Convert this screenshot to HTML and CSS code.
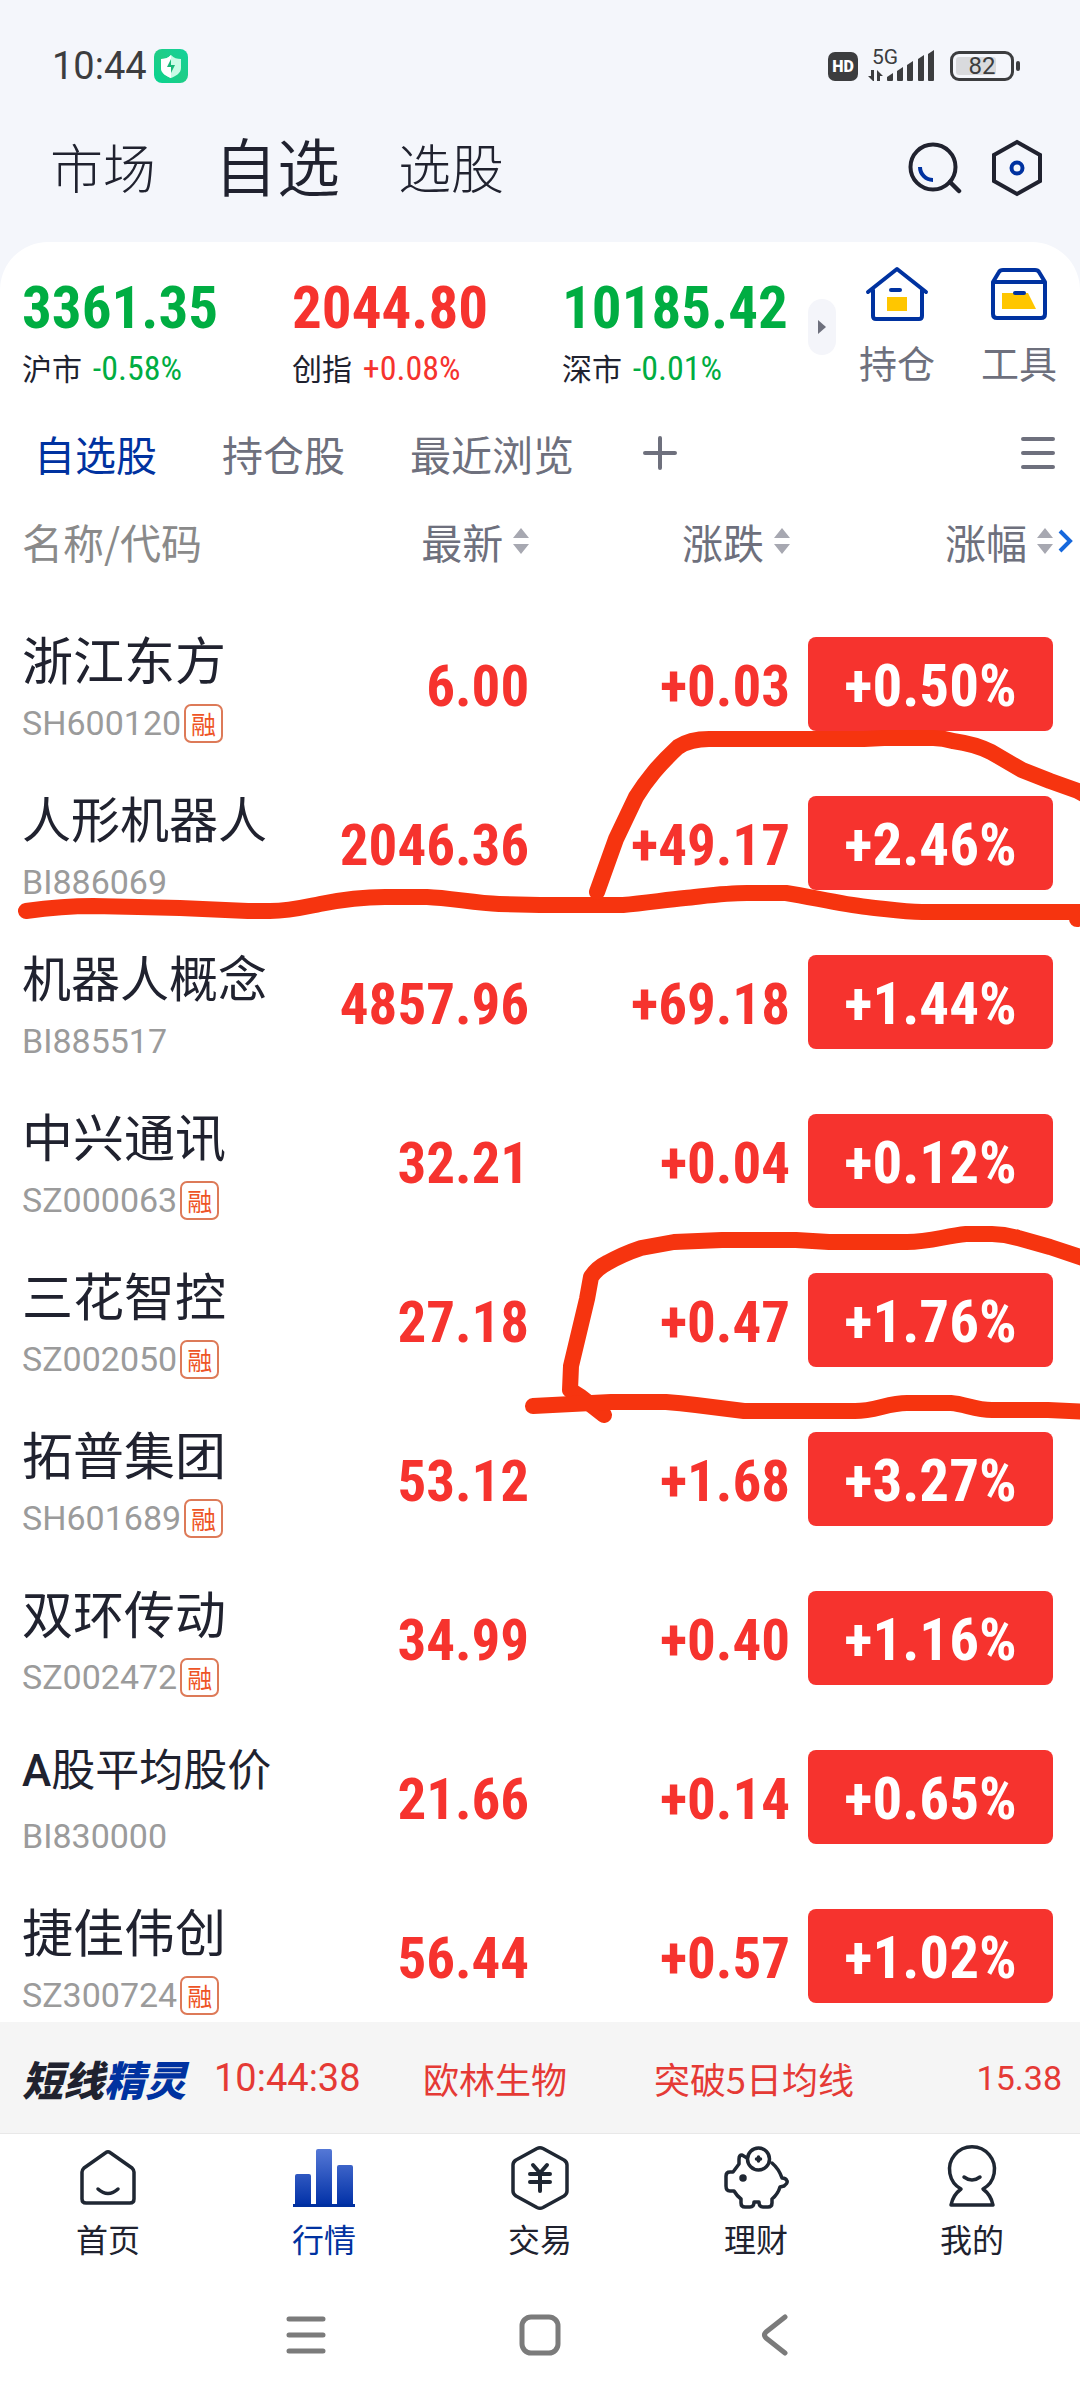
FILE: index.html
```html
<!DOCTYPE html>
<html lang="zh-CN">
<head>
<meta charset="utf-8">
<meta name="viewport" content="width=device-width, initial-scale=1">
<title>自选</title>
<link rel="stylesheet" href="styles.css">
</head>
<body>
<svg class="defs" width="0" height="0" aria-hidden="true">
  <symbol id="sort" viewBox="0 0 16 26"><path d="M8 0l8 10H0zM8 26l8-10H0z" fill="#a7a8b1"/></symbol>
</svg>

<div class="status">
  <span class="status-time">10:44</span>
  <svg class="status-shield" width="34" height="34" viewBox="0 0 34 34">
    <defs><linearGradient id="shield" x1="0" y1="1" x2="1" y2="0"><stop offset="0" stop-color="#06d492"/><stop offset=".5" stop-color="#1fcd86"/><stop offset="1" stop-color="#12d29c"/></linearGradient></defs>
    <rect width="34" height="34" rx="8" fill="url(#shield)"/>
    <path d="M17 6c3 3 6 4 10 4v9c0 5-5 8-10 10C12 27 7 24 7 19v-9c4 0 7-1 10-4z" fill="#c9fbe6"/>
    <path d="M17 6v23C12 27 7 24 7 19v-9c4 0 7-1 10-4z" fill="#fff"/>
    <path d="M17 10v6h4l-4 8v-6h-4z" fill="#17b878"/>
  </svg>
  <span class="status-hd">HD</span>
  <span class="status-net">
    <span class="status-5g">5G</span>
    <svg width="68" height="32" viewBox="0 0 68 32" fill="#3c3d3f">
      <path d="M5 20v11L0 26h3v-6zM3 20h3v11H5L0 26h3zM9 31V20l6 6h-3v5z"/>
      <path d="M19 31v-4l6-4v7q0 1-1 1h-4q-1 0-1-1zM29 21l6-4v13q0 1-1 1h-4q-1 0-1-1zM39 15l6-4v19q0 1-1 1h-4q-1 0-1-1zM50 9l6-4v25q0 1-1 1h-4q-1 0-1-1zM60 4l6-4v30q0 1-1 1h-4q-1 0-1-1z"/>
    </svg>
  </span>
  <span class="battery"><span class="battery-level"></span><span class="battery-text">82</span></span>
</div>

<header class="top">
  <nav class="top-tabs">
    <a href="#market">市场</a>
    <a href="#watch" class="is-active" aria-current="page">自选</a>
    <a href="#pick">选股</a>
  </nav>
  <button class="icon-btn" aria-label="搜索">
    <svg width="54" height="54" viewBox="0 0 54 54" fill="none" stroke-linecap="round">
      <circle cx="25" cy="26" r="22.5" stroke="#20222f" stroke-width="4"/>
      <path d="M42 41l9 9" stroke="#20222f" stroke-width="4.500"/>
      <path d="M12 26a13 13 0 0 0 13 13" stroke="#0032a0" stroke-width="4" stroke-linecap="butt"/>
    </svg>
  </button>
  <button class="icon-btn" aria-label="设置">
    <svg width="50" height="58" viewBox="0 0 50 58" fill="none">
      <path d="M25 3l23 13v26L25 55 2 42V16z" stroke="#20222f" stroke-width="4"/>
      <circle cx="25" cy="29" r="5.500" stroke="#0032a0" stroke-width="4"/>
    </svg>
  </button>
</header>

<main class="card">
  <section class="summary">
    <div class="indices">
      <div class="index down"><strong>3361.35</strong><p><span>沪市</span> <em>-0.58%</em></p></div>
      <div class="index up"><strong>2044.80</strong><p><span>创指</span> <em>+0.08%</em></p></div>
      <div class="index down"><strong>10185.42</strong><p><span>深市</span> <em>-0.01%</em></p></div>
    </div>
    <button class="expand" aria-label="展开指数"><svg width="8" height="14" viewBox="0 0 8 14"><path d="M0 0l8 7-8 7z" fill="#6e707d"/></svg></button>
    <a class="quick" href="#hold">
      <svg width="64" height="56" viewBox="0 0 64 56" fill="none" stroke="#0032a0" stroke-width="4" stroke-linecap="round" stroke-linejoin="round">
        <path d="M3 26L32 3l29 23M8 24v26q0 3 3 3h43q3 0 3-3V24"/>
        <path d="M26 24h9"/><path d="M22 31h20v14H22z" fill="#ffc600" stroke="none"/>
      </svg>
      持仓</a>
    <a class="quick" href="#tools">
      <svg width="58" height="56" viewBox="0 0 58 56" fill="none" stroke="#0032a0" stroke-width="4" stroke-linecap="round" stroke-linejoin="round">
        <path d="M3 16L9 6q1-2 4-2h32q3 0 4 2l6 10v32q0 4-4 4H7q-4 0-4-4zM3 16h52"/>
        <path d="M12 27h26l8 16H12z" fill="#ffc600" stroke="none"/><path d="M25 27h9"/>
      </svg>
      工具</a>
  </section>

  <div class="groups">
    <button class="is-active">自选股</button>
    <button>持仓股</button>
    <button>最近浏览</button>
    <button class="add" aria-label="添加分组"><svg width="34" height="34" viewBox="0 0 34 34" stroke="#6e707d" stroke-width="4" stroke-linecap="round"><path d="M2 17h30M17 2v30"/></svg></button>
    <button class="menu" aria-label="分组管理"><svg width="34" height="34" viewBox="0 0 34 34" stroke="#6e707d" stroke-width="4" stroke-linecap="round"><path d="M2 3h30M2 17h30M2 31h30"/></svg></button>
  </div>

  <div class="list">
    <table class="quotes">
      <colgroup><col class="c-name"><col class="c-price"><col class="c-change"><col class="c-pct"></colgroup>
      <thead>
        <tr>
          <th class="h-name">名称/代码</th>
          <th><button>最新<svg width="16" height="26"><use href="#sort"/></svg></button></th>
          <th><button>涨跌<svg width="16" height="26"><use href="#sort"/></svg></button></th>
          <th class="h-pct"><button>涨幅<svg width="16" height="26"><use href="#sort"/></svg></button><svg class="more" width="16" height="24" viewBox="0 0 16 24"><path d="M2 2l10 10L2 22" fill="none" stroke="#1668dc" stroke-width="4"/></svg></th>
        </tr>
      </thead>
      <tbody>
        <tr><td><div class="name">浙江东方</div><div class="code">SH600120<i>融</i></div></td><td>6.00</td><td>+0.03</td><td><span class="pct">+0.50%</span></td></tr>
        <tr><td><div class="name name-5">人形机器人</div><div class="code">BI886069</div></td><td>2046.36</td><td>+49.17</td><td><span class="pct">+2.46%</span></td></tr>
        <tr><td><div class="name name-5">机器人概念</div><div class="code">BI885517</div></td><td>4857.96</td><td>+69.18</td><td><span class="pct">+1.44%</span></td></tr>
        <tr><td><div class="name">中兴通讯</div><div class="code">SZ000063<i>融</i></div></td><td>32.21</td><td>+0.04</td><td><span class="pct">+0.12%</span></td></tr>
        <tr><td><div class="name">三花智控</div><div class="code">SZ002050<i>融</i></div></td><td>27.18</td><td>+0.47</td><td><span class="pct">+1.76%</span></td></tr>
        <tr><td><div class="name">拓普集团</div><div class="code">SH601689<i>融</i></div></td><td>53.12</td><td>+1.68</td><td><span class="pct">+3.27%</span></td></tr>
        <tr><td><div class="name">双环传动</div><div class="code">SZ002472<i>融</i></div></td><td>34.99</td><td>+0.40</td><td><span class="pct">+1.16%</span></td></tr>
        <tr><td><div class="name name-6"><b>A</b>股平均股价</div><div class="code">BI830000</div></td><td>21.66</td><td>+0.14</td><td><span class="pct">+0.65%</span></td></tr>
        <tr><td><div class="name">捷佳伟创</div><div class="code">SZ300724<i>融</i></div></td><td>56.44</td><td>+0.57</td><td><span class="pct">+1.02%</span></td></tr>
      </tbody>
    </table>
    <svg class="ink" viewBox="0 484 1080 1552" preserveAspectRatio="none" fill="none" stroke="#f6340f" stroke-width="16" stroke-linecap="round" stroke-linejoin="round" aria-hidden="true">
      <path d="M26 912C48 909 70 907 93 907L138 908 180 909 248 912H270C290 912 305 908 320 905S355 898 385 898H427C450 899 475 904 499 905L540 906H623C645 904 665 901 685 899S725 894 747 894H786C812 898 840 905 867 908S905 913 922 913H1090M1077 913V920"/>
      <path d="M597 893L616 840 636 798Q644 785 654 773T678 748Q690 740 709 740H864L884 739H933Q943 739 953 742 975 745 991 753L1022 771 1050 782 1078 792 1092 800"/>
      <path d="M1092 1262L1050 1248 1018 1239Q1005 1235 992 1235H966C945 1237 930 1243 907 1243H829L796 1241H722L674 1243 641 1249Q623 1255 607 1264 597 1269 591 1278L587 1300 571 1367 570 1391 581 1398 604 1416"/>
      <path d="M533 1407L611 1403H666C680 1404 688 1405 696 1406L744 1412H855C875 1412 888 1404 907 1404H951C965 1405 975 1411 992 1411H1048L1092 1413"/>
    </svg>
  </div>
</main>

<section class="ticker">
  <h2>短线<span>精灵</span></h2>
  <time>10:44:38</time>
  <span class="t-stock">欧林生物</span>
  <span class="t-event">突破5日均线</span>
  <span class="t-price">15.38</span>
</section>

<nav class="tabbar">
  <a href="#home"><svg width="68" height="68" viewBox="0 0 68 68" fill="none" stroke="#1f2733" stroke-width="3.500" stroke-linecap="round" stroke-linejoin="round"><path d="M32 8.500q2-1.500 4 0L58 24q2 2 2 4v27q0 4-4 4H12q-4 0-4-4V28q0-2 2-4z"/><path d="M24 45q10 9 20 0"/></svg>首页</a>
  <a href="#quotes" class="is-active" aria-current="page"><svg width="68" height="68" viewBox="0 0 68 68"><defs><linearGradient id="bars" gradientUnits="userSpaceOnUse" x1="0" y1="5" x2="0" y2="62"><stop offset="0" stop-color="#5578d6"/><stop offset="1" stop-color="#0030a6"/></linearGradient></defs><path d="M5 60V32q0-2 2-2h12q2 0 2 2v28zM26 60V7q0-2 2-2h12q2 0 2 2v53zM47 60V23q0-2 2-2h12q2 0 2 2v37z" fill="url(#bars)"/><path d="M3 60h62v3H3z" fill="#0030a0"/></svg>行情</a>
  <a href="#trade"><svg width="68" height="68" viewBox="0 0 68 68" fill="none" stroke="#1f2733" stroke-width="3.500" stroke-linecap="round" stroke-linejoin="round"><path d="M31 4.500q3-1.500 6 0L58 16q3 2 3 5v26q0 3-3 5L37 63.500q-3 1.500-6 0L10 52q-3-2-3-5V21q0-3 3-5z"/><path d="M27 21l7 8 7-8M24 30h20M24 38h20M34 30v17" stroke-width="4"/></svg>交易</a>
  <a href="#wealth"><svg width="68" height="68" viewBox="0 0 68 68" fill="none" stroke="#1f2733" stroke-width="3.500" stroke-linecap="round" stroke-linejoin="round"><circle cx="36.500" cy="15" r="11"/><path d="M36.500 13v4M34.500 15h4"/><path d="M25 14l-5-3q-3 0-3 4v5l-6 8H8q-4 0-4 4v10q0 5 4 5h4q3 5 7 8v4q0 4 4 4h5q4 0 4-5h5q0 5 4 5h5q4 0 4-4v-4q6-5 8-12l4-1q4-3 3-5-1-3-5-3-3-9-10-15"/><circle cx="21" cy="34" r="2" fill="#1f2733"/></svg>理财</a>
  <a href="#me"><svg width="68" height="68" viewBox="0 0 68 68" fill="none" stroke="#1f2733" stroke-width="3.500" stroke-linecap="round" stroke-linejoin="round"><path d="M23 45a22.500 22.500 0 1 1 22 0q8 6 10 16H13q2-10 10-16z"/><path d="M26 33q8 6 16 0"/></svg>我的</a>
</nav>

<div class="sysbar">
  <button aria-label="最近任务"><svg width="42" height="42" viewBox="0 0 42 42" stroke="#7b7b7b" stroke-width="5" stroke-linecap="round"><path d="M4 5h34M4 21h34M4 37h34"/></svg></button>
  <button aria-label="主屏幕"><svg width="42" height="42" viewBox="0 0 42 42" fill="none" stroke="#7b7b7b" stroke-width="5"><rect x="3" y="3" width="36" height="36" rx="9"/></svg></button>
  <button aria-label="返回"><svg width="42" height="42" viewBox="0 0 42 42" fill="none" stroke="#7b7b7b" stroke-width="5" stroke-linecap="round" stroke-linejoin="round"><path d="M32 3L13 18q-3 3 0 6l19 15"/></svg></button>
</div>
</body>
</html>
```
FILE: styles.css
```css
:root {
  --ink: #20222f;
  --muted: #6e707d;
  --brand: #0032a0;
  --up: #f6332e;
  --down: #00ad42;
  --cjk: "Noto Sans CJK SC", sans-serif;
  --num: "Roboto Condensed", Roboto, "Noto Sans CJK SC", sans-serif;
}

* { box-sizing: border-box; }

body {
  margin: 0;
  height: 100vh;
  display: flex;
  flex-direction: column;
  background: #f4f6fb;
  color: var(--ink);
  font-family: var(--cjk);
}

button {
  margin: 0;
  padding: 0;
  border: 0;
  background: none;
  color: inherit;
  font: inherit;
}

a { color: inherit; text-decoration: none; }
svg { display: block; flex: none; }
.defs { position: absolute; }

/* system status bar */
.status {
  flex: none;
  display: flex;
  align-items: center;
  height: 112px;
  padding: 20px 66px 0 52px;
  color: #3c3d3f;
  font-family: Roboto, sans-serif;
}
.status-time { font-size: 38px; margin-right: 7px; }
.status-hd {
  margin-left: auto;
  width: 30px;
  height: 29px;
  border-radius: 7px;
  background: #3c3d3f;
  color: #fff;
  font-size: 16px;
  font-weight: 900;
  line-height: 29px;
  text-align: center;
}
.status-net { position: relative; margin: 0 14px 0 10px; }
.status-5g {
  position: absolute;
  left: 4px;
  top: -3px;
  font-size: 21px;
  line-height: 20px;
}
.battery {
  position: relative;
  width: 64px;
  height: 30px;
  padding: 3px;
  border: 3px solid #3c3d3f;
  border-radius: 9px;
}
.battery::after {
  content: "";
  position: absolute;
  right: -9px;
  top: 7px;
  width: 4px;
  height: 10px;
  border-radius: 2px;
  background: #3c3d3f;
}
.battery-level { display: block; width: 40px; height: 18px; border-radius: 3px; background: #d9dadd; }
.battery-text {
  position: absolute;
  inset: 0;
  font-size: 24px;
  line-height: 25px;
  text-align: center;
}

/* page header */
.top {
  flex: none;
  display: flex;
  align-items: center;
  height: 112px;
  margin-bottom: 18px;
  padding: 0 38px 0 50px;
  gap: 30px;
}
.top-tabs {
  flex: 1;
  display: flex;
  align-items: center;
  gap: 58px;
  padding-bottom: 4px;
  font-size: 53px;
  font-weight: 300;
  line-height: 64px;
}
.top-tabs .is-active { padding-bottom: 4px; font-size: 63px; font-weight: 350; }

/* white card */
.card {
  flex: 1;
  min-height: 0;
  display: flex;
  flex-direction: column;
  border-radius: 48px 48px 0 0;
  background: #fff;
}
.summary { flex: none; display: flex; padding: 20px 0 37px 22px; }
.indices {
  flex: 1;
  display: grid;
  grid-template-columns: 270fr 270fr 246fr;
  padding-top: 14px;
}
.index strong {
  display: block;
  font: 700 59px/64px var(--num);
}
.index p { margin: 9px 0 0; font-size: 30px; line-height: 36px; white-space: nowrap; color: var(--ink); }
.index em { margin-left: 4px; font: 400 34px/36px var(--num); }
.up strong, .up em { color: var(--up); }
.down strong, .down em { color: var(--down); }
.expand {
  display: grid;
  place-items: center;
  width: 28px;
  height: 56px;
  margin-top: 37px;
  border-radius: 14px;
  background: #f4f5fa;
}
.quick {
  display: flex;
  flex-direction: column;
  align-items: center;
  gap: 16px;
  width: 122px;
  padding-top: 4px;
  color: var(--muted);
  font-size: 38px;
  line-height: 48px;
}

.groups {
  flex: none;
  display: flex;
  align-items: center;
  height: 60px;
  padding: 0 25px 0 34px;
  gap: 65px;
  color: var(--muted);
  font-size: 41px;
  line-height: 60px;
}
.groups .is-active { color: var(--brand); }
.add { margin-left: 4px; }
.menu { margin-left: auto; }

/* quote table */
.list { flex: 1; min-height: 0; overflow: auto; position: relative; scrollbar-width: none; }
.quotes { width: 100%; table-layout: fixed; border-collapse: collapse; }
.c-name { width: 28%; }
.c-price { width: 21%; }
.c-pct { width: 290px; }
.quotes th {
  height: 121px;
  padding: 0 0 6px;
  color: var(--muted);
  font-size: 41px;
  line-height: 60px;
  font-weight: 400;
  text-align: right;
}
.quotes th button { display: flex; align-items: center; gap: 10px; margin-left: auto; }
.quotes .h-name { padding-left: 22px; color: #8a8a8a; text-align: left; }
.quotes .h-pct { position: relative; padding-right: 27px; }
.more { position: absolute; right: 6px; top: 46px; }
.quotes td {
  height: 159px;
  padding: 7px 0 0;
  color: var(--up);
  font: 700 57px/64px var(--num);
  text-align: right;
}
.quotes td:first-child { padding: 26px 0 0 22px; vertical-align: top; text-align: left; }
.quotes td:last-child { padding: 0 27px 0 18px; }
.name { color: var(--ink); font: 400 51px/56px var(--cjk); white-space: nowrap; }
.name-5 { font-size: 49px; }
.name-6 { font-size: 44px; line-height: 48px; padding-bottom: 4px; }
.name b { font-family: Roboto, sans-serif; font-weight: 500; }
.code {
  display: flex;
  align-items: center;
  gap: 3px;
  margin-top: 17px;
  color: #9b9b9b;
  font: 400 34px/40px Roboto, sans-serif;
}
.code i {
  width: 39px;
  height: 39px;
  border: 2px solid #dd7a58;
  border-radius: 7px;
  color: #ee5426;
  font: 400 25px/35px var(--cjk);
  text-align: center;
}
.pct {
  display: block;
  padding-top: 4px;
  border-radius: 8px;
  background: var(--up);
  color: #fff;
  font-size: 59px;
  line-height: 90px;
  text-align: center;
}
.ink { position: absolute; left: 0; top: 0; width: 100%; height: 1552px; pointer-events: none; }

/* alert ticker */
.ticker {
  flex: none;
  display: grid;
  grid-template-columns: 192fr 209fr 231fr 205fr 203fr;
  align-items: center;
  height: 112px;
  padding: 0 18px 0 22px;
  border-bottom: 1px solid #e8e8e8;
  background: #f5f5f5;
  color: #e53a35;
  font-size: 36px;
  line-height: 48px;
  white-space: nowrap;
}
.ticker h2 { margin: 0; color: var(--ink); font-size: 41px; font-weight: 900; font-style: italic; }
.ticker h2 span { color: var(--brand); }
.ticker time { font-family: Roboto, sans-serif; font-size: 38px; }
.t-price { font: 400 34px/48px Roboto, sans-serif; text-align: right; }

/* bottom navigation */
.tabbar { flex: none; display: flex; height: 136px; padding-top: 10px; background: #fff; }
.tabbar a {
  flex: 1;
  display: flex;
  flex-direction: column;
  align-items: center;
  gap: 6px;
  font-size: 32px;
  line-height: 40px;
}
.tabbar .is-active { color: var(--brand); }

.sysbar {
  flex: none;
  display: flex;
  align-items: center;
  justify-content: center;
  gap: 192px;
  height: 130px;
  background: #fff;
}
```
